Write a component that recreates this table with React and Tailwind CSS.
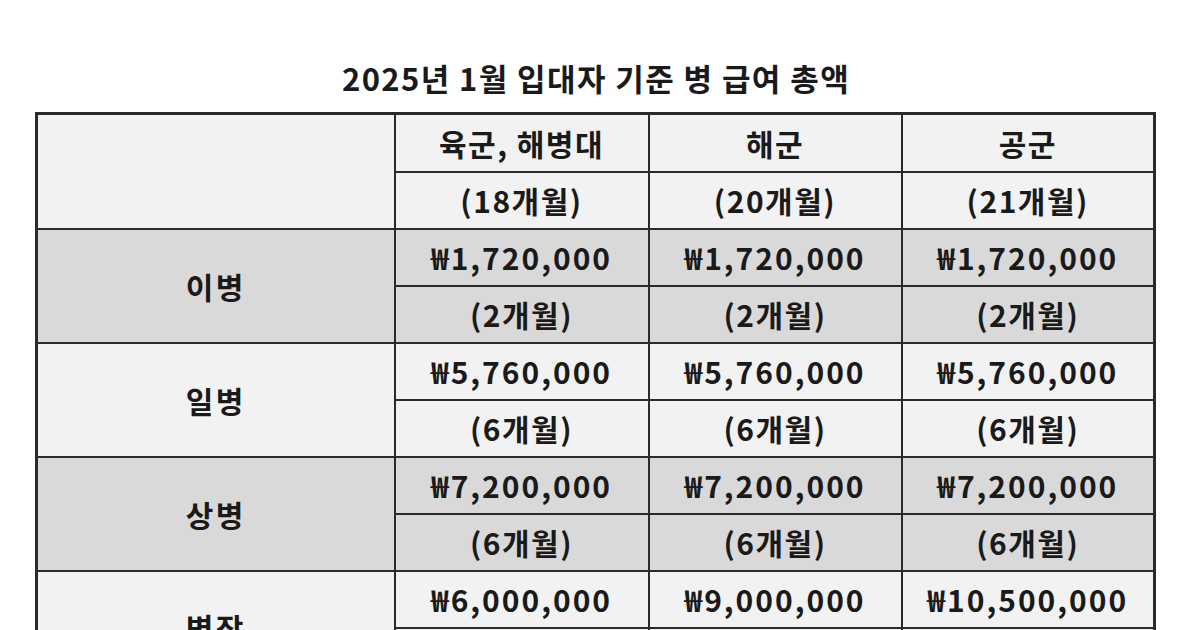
import React from "react";

const groups = [
  { rank: "이병", bg: "bg-[#d9d9d9]", amounts: ["₩1,720,000", "₩1,720,000", "₩1,720,000"], months: ["(2개월)", "(2개월)", "(2개월)"] },
  { rank: "일병", bg: "bg-[#f2f2f2]", amounts: ["₩5,760,000", "₩5,760,000", "₩5,760,000"], months: ["(6개월)", "(6개월)", "(6개월)"] },
  { rank: "상병", bg: "bg-[#d9d9d9]", amounts: ["₩7,200,000", "₩7,200,000", "₩7,200,000"], months: ["(6개월)", "(6개월)", "(6개월)"] },
  { rank: "병장", bg: "bg-[#f2f2f2]", amounts: ["₩6,000,000", "₩9,000,000", "₩10,500,000"], months: ["(4개월)", "(6개월)", "(7개월)"] },
];

const cell = "border-2 border-[#2a2a2a] text-center align-middle p-0 leading-none";

export default function App() {
  return (
    <div
      className="w-[1200px] h-[630px] overflow-hidden bg-white text-[#1a1a1a]"
      style={{ fontFamily: '"Noto Sans CJK KR", "Noto Sans", sans-serif' }}
    >
      <div className="pt-[58px] flex flex-col items-center">
        <h1 className="text-[31px] font-bold leading-[40px] tracking-[1.4px] h-[40px] ml-[-8px]">
          2025년 1월 입대자 기준 병 급여 총액
        </h1>
      </div>
      <div className="pl-[35px] pt-[14px]">
        <table className="table-fixed border-collapse border-[3px] border-[#2a2a2a] w-[1118px] text-[30px] font-bold tracking-[1.5px]">
          <colgroup>
            <col className="w-[358px]" />
            <col className="w-[254px]" />
            <col className="w-[253px]" />
            <col className="w-[253px]" />
          </colgroup>
          <tbody>
            <tr className="h-[58px] bg-[#f2f2f2]">
              <td rowSpan={2} className={cell}></td>
              <td className={cell}>육군, 해병대</td>
              <td className={cell}>해군</td>
              <td className={cell}>공군</td>
            </tr>
            <tr className="h-[57px] bg-[#f2f2f2]">
              <td className={cell}>(18개월)</td>
              <td className={cell}>(20개월)</td>
              <td className={cell}>(21개월)</td>
            </tr>
            {groups.map((g) => (
              <React.Fragment key={g.rank}>
                <tr className={`h-[57px] ${g.bg}`}>
                  <td rowSpan={2} className={`${cell} tracking-[2.5px]`}>{g.rank}</td>
                  {g.amounts.map((a, i) => (
                    <td key={i} className={`${cell} tracking-[2px]`}>{a}</td>
                  ))}
                </tr>
                <tr className={`h-[57px] ${g.bg}`}>
                  {g.months.map((m, i) => (
                    <td key={i} className={cell}>{m}</td>
                  ))}
                </tr>
              </React.Fragment>
            ))}
          </tbody>
        </table>
      </div>
    </div>
  );
}
